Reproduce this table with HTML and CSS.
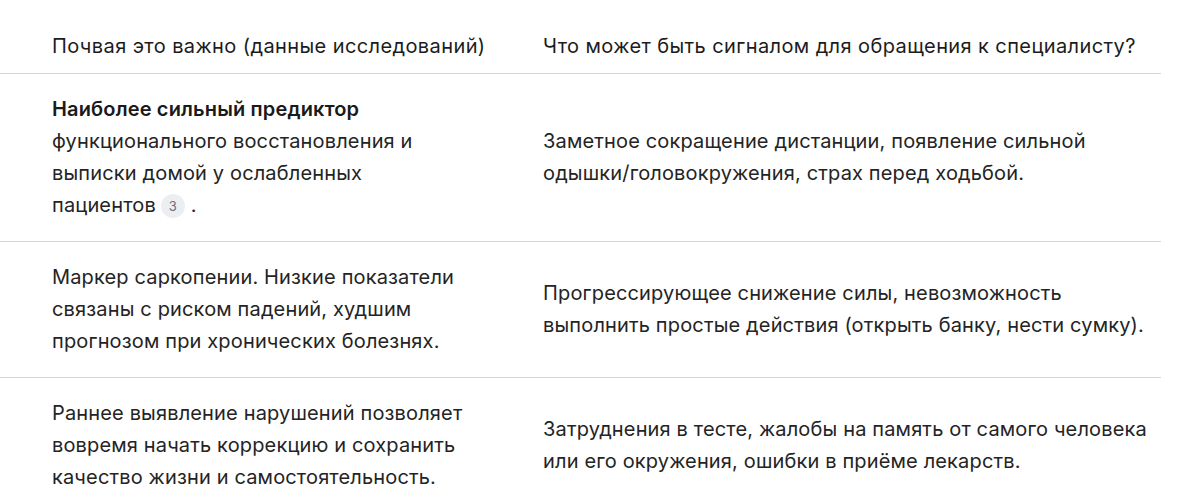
FILE: index.html
```html
<!DOCTYPE html>
<html lang="ru">
<head>
<meta charset="utf-8">
<link rel="stylesheet" href="styles.css">
</head>
<body>
<table class="tbl">
  <thead>
    <tr>
      <th class="c1">Почвая это важно (данные исследований)</th>
      <th class="c2">Что может быть сигналом для обращения к специалисту?</th>
    </tr>
  </thead>
  <tbody>
    <tr>
      <td class="c1"><strong class="lead">Наиболее сильный предиктор</strong>функционального восстановления и выписки домой у ослабленных <span class="nowrap">пациентов<span class="ref">3</span></span> .</td>
      <td class="c2">Заметное сокращение дистанции, появление сильной одышки/головокружения, страх перед ходьбой.</td>
    </tr>
    <tr>
      <td class="c1">Маркер саркопении. Низкие показатели связаны с риском падений, худшим прогнозом при хронических болезнях.</td>
      <td class="c2">Прогрессирующее снижение силы, невозможность выполнить простые действия (открыть банку, нести сумку).</td>
    </tr>
    <tr>
      <td class="c1">Раннее выявление нарушений позволяет вовремя начать коррекцию и сохранить качество жизни и самостоятельность.</td>
      <td class="c2">Затруднения в тесте, жалобы на память от самого человека или его окружения, ошибки в приёме лекарств.</td>
    </tr>
  </tbody>
</table>
</body>
</html>
```

FILE: styles.css
```css
html, body {
  margin: 0;
  padding: 0;
  background: #ffffff;
}
body {
  font-family: Inter, "Noto Sans", "Liberation Sans", sans-serif;
  font-size: 20px;
  letter-spacing: 0.15px;
  line-height: 32px;
  color: #242424;
}
.tbl {
  border-collapse: collapse;
  width: 1161px;
  table-layout: fixed;
}
.tbl th {
  font-weight: 400;
  letter-spacing: 0.4px;
  text-align: left;
  color: #1c1c1c;
  white-space: nowrap;
  padding: 30px 6px 11px 12px;
  border-bottom: 1px solid #d6d6d6;
  vertical-align: middle;
}
.tbl td {
  padding: 19px 6px 20px 12px;
  border-bottom: 1px solid #d6d6d6;
  vertical-align: middle;
}
.tbl th.c1, .tbl td.c1 {
  width: 423px;
  padding-left: 52px;
  padding-right: 56px;
}
.lead {
  display: block;
  font-weight: 600;
  color: #1a1a1a;
}
.nowrap {
  white-space: nowrap;
}
.ref {
  display: inline-block;
  width: 24px;
  height: 24px;
  line-height: 24px;
  margin-left: 5px;
  border-radius: 50%;
  background: #eceef2;
  color: #6b6f78;
  font-size: 13px;
  letter-spacing: 0;
  text-align: center;
  vertical-align: 1px;
}
```
